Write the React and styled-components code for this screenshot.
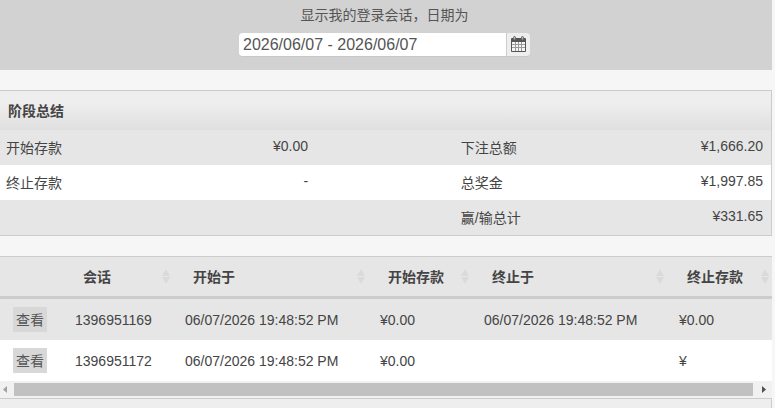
import React, { useState } from "react";
import styled, { createGlobalStyle } from "styled-components";

const summary = [
  ["开始存款", "¥0.00", "下注总额", "¥1,666.20"],
  ["终止存款", "-", "总奖金", "¥1,997.85"],
  ["", "", "赢/输总计", "¥331.65"],
];

const columns = ["会话", "开始于", "开始存款", "终止于", "终止存款"];

const sessions = [
  {
    id: "1396951169",
    start: "06/07/2026 19:48:52 PM",
    opening: "¥0.00",
    end: "06/07/2026 19:48:52 PM",
    closing: "¥0.00",
  },
  {
    id: "1396951172",
    start: "06/07/2026 19:48:52 PM",
    opening: "¥0.00",
    end: "",
    closing: "¥",
  },
];

function CalendarIcon() {
  return (
    <svg width="15" height="16" viewBox="0 0 15 16" fill="none">
      <path
        d="M0 3a1 1 0 0 1 1-1h13a1 1 0 0 1 1 1v12a1 1 0 0 1-1 1H1a1 1 0 0 1-1-1z"
        fill="#555"
      />
      <path d="M1 6h13v9H1z" fill="#f4f4f4" />
      <path
        d="M4.5 6v9M7.5 6v9M10.5 6v9M1 8.5h13M1 11.5h13"
        stroke="#999"
      />
      <rect x="2.5" y="0.5" width="2" height="3.5" rx="1" fill="#b5b5b5" stroke="#666" />
      <rect x="10.5" y="0.5" width="2" height="3.5" rx="1" fill="#b5b5b5" stroke="#666" />
    </svg>
  );
}

function SortIcon() {
  return (
    <svg width="8" height="15" viewBox="0 0 8 15" fill="#dadada">
      <path d="M4 0L8 7H0zM0 8H8L4 15z" />
    </svg>
  );
}

function App() {
  const [range, setRange] = useState("2026/06/07 - 2026/06/07");

  return (
    <Page>
      <GlobalStyle />
      <Filter>
        <label htmlFor="range">显示我的登录会话，日期为</label>
        <DateField>
          <input
            id="range"
            type="text"
            value={range}
            onChange={(e) => setRange(e.target.value)}
          />
          <button type="button" aria-label="日期">
            <CalendarIcon />
          </button>
        </DateField>
      </Filter>

      <Summary>
        <h2>阶段总结</h2>
        <SummaryTable>
          <colgroup>
            <Col $width="20%" />
            <Col $width="21%" />
            <Col $width="18%" />
            <Col $width="20%" />
            <Col $width="21%" />
          </colgroup>
          <tbody>
            {summary.map(([label, value, label2, value2]) => (
              <tr key={label2}>
                <Label>{label}</Label>
                <Amount>{value}</Amount>
                <td />
                <Label>{label2}</Label>
                <Amount>{value2}</Amount>
              </tr>
            ))}
          </tbody>
        </SummaryTable>
      </Summary>

      <Sessions>
        <SessionTable>
          <colgroup>
            <Col $width="65px" />
            <Col $width="110px" />
            <Col $width="195px" />
            <Col $width="104px" />
            <Col $width="195px" />
            <Col $width="105px" />
          </colgroup>
          <thead>
            <tr>
              <th />
              {columns.map((column) => (
                <th key={column}>
                  <SortButton type="button">
                    {column}
                    <SortIcon />
                  </SortButton>
                </th>
              ))}
            </tr>
          </thead>
          <tbody>
            {sessions.map((session) => (
              <tr key={session.id}>
                <ViewCell>
                  <ViewButton type="button">查看</ViewButton>
                </ViewCell>
                <td>{session.id}</td>
                <td>{session.start}</td>
                <td>{session.opening}</td>
                <td>{session.end}</td>
                <td>{session.closing}</td>
              </tr>
            ))}
          </tbody>
        </SessionTable>
      </Sessions>
      <ScrollBar>
        <svg width="4" height="7" viewBox="0 0 4 7" fill="#a3a3a3">
          <path d="M4 0V7L0 3.5z" />
        </svg>
        <Thumb />
        <svg width="4" height="7" viewBox="0 0 4 7" fill="#505050">
          <path d="M0 0L4 3.5L0 7z" />
        </svg>
      </ScrollBar>
      <Footer />
    </Page>
  );
}

const GlobalStyle = createGlobalStyle`
  * {
    box-sizing: border-box;
  }
  body {
    margin: 0;
    background-color: #f6f6f6;
    color: #444;
    font-family: "Liberation Sans", "Noto Sans CJK SC", sans-serif;
    font-size: 14px;
    line-height: 20px;
  }
  button, input {
    font: inherit;
    color: inherit;
    border: none;
    padding: 0;
    margin: 0;
  }
  button {
    cursor: pointer;
  }
  svg {
    display: block;
    flex: none;
  }
  table {
    width: 100%;
    table-layout: fixed;
    border-collapse: separate;
    border-spacing: 0;
  }
`;

const Page = styled.div`
  padding-right: 3px;
`;

const Filter = styled.div`
  display: flex;
  flex-direction: column;
  align-items: center;
  gap: 8px;
  padding: 5px 3px 13px 0;
  background-color: #d2d2d2;
  color: #555;
`;

const DateField = styled.div`
  display: flex;
  width: 291px;
  height: 24px;
  overflow: hidden;
  border-bottom: 1px solid #c8c8c8;
  border-radius: 4px;
  input {
    flex: 1;
    min-width: 0;
    padding: 0 4px;
    background-color: #fff;
    font-size: 16px;
    outline: none;
  }
  button {
    display: flex;
    justify-content: center;
    width: 24px;
    padding-top: 3px;
    border-left: 1px solid #ccc;
    background-color: #eee;
  }
`;

const Summary = styled.section`
  margin: 20px 0;
  border: 1px solid #ccc;
  border-left: none;
  h2 {
    margin: 0;
    padding: 10px 8px 9px;
    background: linear-gradient(#eee 30%, #e0e0e0);
    font-size: 14px;
    line-height: 20px;
  }
`;

const SummaryTable = styled.table`
  tr {
    height: 35px;
    background-color: #fff;
  }
  tr:nth-child(odd) {
    background-color: #e6e6e6;
  }
  td {
    padding: 0;
    vertical-align: top;
  }
`;

const Col = styled.col`
  width: ${(props) => props.$width};
`;

const Label = styled.td`
  && {
    padding: 8px 6px 7px;
  }
`;

const Amount = styled.td`
  && {
    padding: 6px 8px;
    text-align: right;
  }
`;

const Sessions = styled.section`
  overflow: hidden;
  border-top: 1px solid #ccc;
`;

const SessionTable = styled.table`
  min-width: 774px;
  th {
    height: 42px;
    padding: 0 5px 0 18px;
    border-bottom: 3px solid #ccc;
    background-color: #e6e6e6;
  }
  tbody tr {
    height: 41px;
    background-color: #fff;
  }
  tbody tr:nth-child(odd) {
    background-color: #e6e6e6;
  }
  td {
    padding: 0 10px;
    white-space: nowrap;
  }
`;

const SortButton = styled.button`
  display: flex;
  align-items: center;
  justify-content: space-between;
  width: 100%;
  background: none;
  font-weight: bold;
`;

const ViewCell = styled.td`
  && {
    padding: 0 13px;
  }
`;

const ViewButton = styled.button`
  display: block;
  width: 34px;
  height: 25px;
  background-color: #d8d8d8;
  color: #555;
`;

const ScrollBar = styled.div`
  display: flex;
  align-items: center;
  gap: 7px;
  height: 17px;
  padding: 0 6px 0 3px;
  background-color: #f1f1f1;
`;

const Thumb = styled.div`
  flex: 1;
  height: 13px;
  margin-right: 2px;
  background-color: #c1c1c1;
`;

const Footer = styled.footer`
  height: 10px;
  border-top: 1px solid #ccc;
  border-right: 1px solid #ccc;
  background-color: #eee;
`;

export default App;
